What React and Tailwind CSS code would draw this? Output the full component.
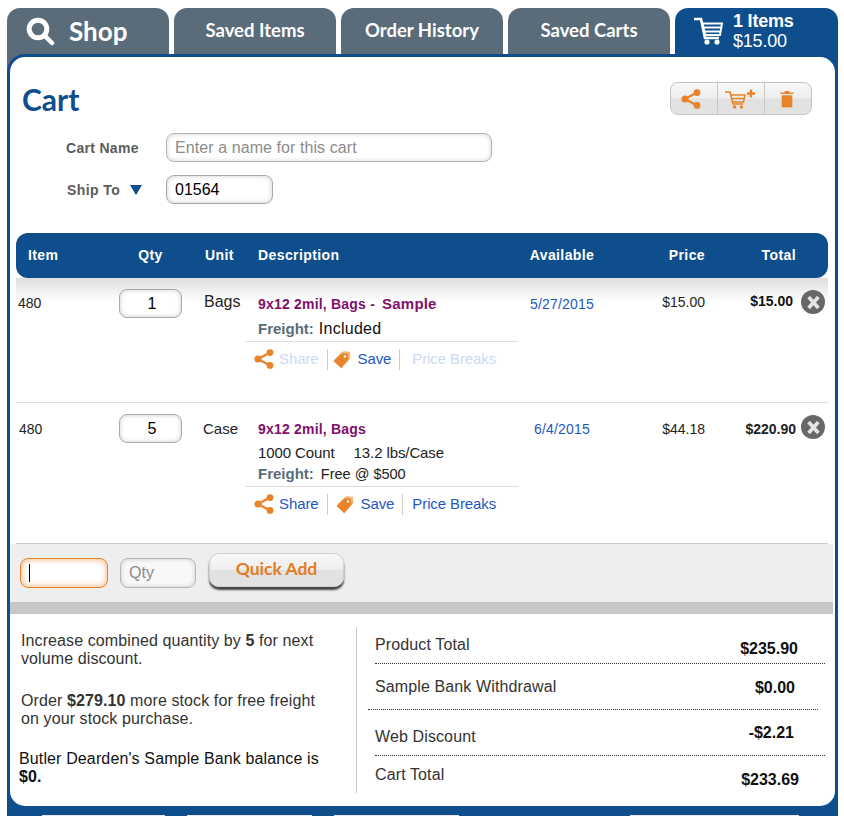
import React from "react";

const BLUE = "#0f4e8c";

function SearchIcon() {
  return (
    <svg width="29" height="29" viewBox="0 0 29 29" fill="none">
      <circle cx="12" cy="12" r="8.8" stroke="#fff" strokeWidth="5" />
      <path d="M18.5 18.5 L26 26" stroke="#fff" strokeWidth="4.5" strokeLinecap="round" />
    </svg>
  );
}

function CartIcon() {
  return (
    <svg width="29" height="28" viewBox="0 0 29 28" fill="none">
      <path d="M0 2 H7 L11 21 H25" stroke="#fff" strokeWidth="2.6" />
      <path d="M8.5 6.5 H28 L26 18 H11 Z M10 10.5 H27 M11 14.5 H26" stroke="#fff" strokeWidth="2" />
      <circle cx="13" cy="25" r="2.6" fill="#fff" />
      <circle cx="23" cy="25" r="2.6" fill="#fff" />
    </svg>
  );
}

function ShareIcon({ size = 20 }) {
  return (
    <svg width={size} height={size} viewBox="0 0 20 20" fill="none">
      <path d="M4 10 L16 3.5 M4 10 L16 16.5" stroke="#e8832a" strokeWidth="2.4" />
      <circle cx="4" cy="10" r="3.6" fill="#e8832a" />
      <circle cx="16" cy="3.6" r="3.4" fill="#e8832a" />
      <circle cx="16" cy="16.4" r="3.4" fill="#e8832a" />
    </svg>
  );
}

function TagIcon() {
  return (
    <svg width="18" height="19" viewBox="0 0 18 19" fill="none">
      <path d="M1 10 L9 2 L11 1 L17 2 L17.5 8 L8.5 18.5 Z" fill="#f3b57e" />
      <path d="M0.5 11 L8.5 3.5 L14.5 3.5 L15.5 9.5 L8 18 Z" fill="#e8832a" />
      <circle cx="12" cy="6.5" r="1.2" fill="#fff" />
    </svg>
  );
}

function CartPlusIcon() {
  return (
    <svg width="32" height="20" viewBox="0 0 32 20" fill="none">
      <path d="M0 3 H5 L8 15 H18" stroke="#e8832a" strokeWidth="1.6" />
      <path d="M6 6 H20 L18.5 13 H8 M7 9.5 H19.5" stroke="#e8832a" strokeWidth="1.5" />
      <circle cx="9.5" cy="18" r="1.7" fill="#e8832a" />
      <circle cx="16.5" cy="18" r="1.7" fill="#e8832a" />
      <path d="M22 4.5 H30 M26 0.5 V8.5" stroke="#e8832a" strokeWidth="2.4" />
    </svg>
  );
}

function TrashIcon() {
  return (
    <svg width="14" height="18" viewBox="0 0 15 18">
      <path d="M0.5 2 H5 V0.5 H10 V2 H14.5 V3.6 H0.5 Z" fill="#e8832a" />
      <path d="M1.8 5 H13.2 V18 H1.8 Z" fill="#e8832a" />
    </svg>
  );
}

function RemoveButton() {
  return (
    <div className="flex h-6 w-6 items-center justify-center rounded-full bg-[#686868]">
      <svg width="13" height="13" viewBox="0 0 12 12">
        <path d="M1.5 1 L10.5 11 M10.5 1 L1.5 11" stroke="#e4e4e4" strokeWidth="3.4" />
      </svg>
    </div>
  );
}

function QtyInput({ value }) {
  return (
    <input
      readOnly
      value={value}
      className="h-[29px] w-[63px] rounded-lg border border-[#a9a9a9] bg-white pl-[3px] text-center text-base text-black shadow-[inset_0_0_5px_rgba(0,0,0,0.2)] outline-none"
    />
  );
}

function LinkRow({ disabled, saveGap, breakGap }) {
  const shareColor = disabled ? "text-[#ccd9f3]" : "text-[#1d57c4]";
  return (
    <div className="flex h-[20px] items-center pl-[9px] text-[15px] tracking-[-0.1px]">
      <ShareIcon />
      <span className={`ml-[5px] ${shareColor}`}>Share</span>
      <div className="ml-[8px] h-[21px] w-px bg-[#ccc]" />
      <div className={saveGap}>
        <TagIcon />
      </div>
      <span className="ml-[7px] text-[#1d57c4]">Save</span>
      <div className="ml-[8px] h-[21px] w-px bg-[#ccc]" />
      <span className={`${breakGap} ${shareColor}`}>Price Breaks</span>
    </div>
  );
}

function SummaryRow({ label, value, labelPad, valuePad, rowClass }) {
  return (
    <div className={`flex justify-between text-base leading-[18px] ${rowClass}`}>
      <span className={`tracking-[0.12px] text-[#333] ${labelPad}`}>{label}</span>
      <span className={`font-bold text-[#111] ${valuePad}`}>{value}</span>
    </div>
  );
}

export default function App() {
  return (
    <div className="h-[816px] w-[844px] overflow-hidden bg-white pt-2 font-['Liberation_Sans',Arial,sans-serif] text-[#222]">
      {/* tabs */}
      <div className="ml-[7px] flex h-[46px] gap-[5px] font-['Lato',sans-serif] font-bold text-white">
        <div className="flex w-[162px] items-center rounded-t-[13px] bg-[#5a6b79] pl-[19px]">
          <SearchIcon />
          <span className="ml-[14px] text-[26px]">Shop</span>
        </div>
        <div className="flex w-[162px] items-center justify-center rounded-t-[13px] bg-[#5a6b79] text-[18.5px]">Saved Items</div>
        <div className="flex w-[162px] items-center justify-center rounded-t-[13px] bg-[#5a6b79] text-[18.5px]">Order History</div>
        <div className="flex w-[162px] items-center justify-center rounded-t-[13px] bg-[#5a6b79] text-[18.5px]">Saved Carts</div>
        <div className="flex w-[163px] items-center rounded-t-[13px] bg-[#0f4e8c] pl-[19px] font-['Liberation_Sans',Arial,sans-serif]">
          <CartIcon />
          <div className="ml-[10px] text-lg leading-[20px] tracking-[-0.2px]">
            <div>1 Items</div>
            <div className="font-normal">$15.00</div>
          </div>
        </div>
      </div>

      <div className="ml-[7px] w-[831px] bg-[linear-gradient(90deg,#5a6b79_50%,#0f4e8c_50%)]">
        <div className="rounded-t-[18px] bg-[#0f4e8c] px-[3px] pt-[3px]">
          <div className="h-[749px] rounded-[15px] bg-white">
            {/* cart heading */}
            <div className="flex h-[58px] items-end justify-between pl-3 pr-[23px]">
              <h1 className="mb-[-1px] h-[34px] font-['Lato',sans-serif] text-[30px] font-bold leading-[34px]" style={{ color: BLUE }}>
                Cart
              </h1>
              <div className="flex h-[33px] w-[142px] rounded-lg border border-[#c4c4c4] bg-[linear-gradient(#f8f8f8,#eeeeee_48%,#e1e1e1_52%,#e3e3e3)]">
                <div className="flex w-[47px] items-center justify-center border-r border-[#c8c8c8] pr-[6px]">
                  <ShareIcon />
                </div>
                <div className="flex w-[47px] items-center justify-center border-r border-[#c8c8c8]">
                  <CartPlusIcon />
                </div>
                <div className="flex flex-1 items-center justify-center pr-[3px]">
                  <TrashIcon />
                </div>
              </div>
            </div>

            {/* cart form */}
            <div className="mt-[18px] flex items-center pl-[56px]">
              <label className="w-[100px] text-sm font-bold tracking-[0.3px] text-[#5c5c5c]">Cart Name</label>
              <input
                placeholder="Enter a name for this cart"
                className="h-[29px] w-[326px] rounded-lg border border-[#b5b5b5] bg-white px-2 text-base tracking-[0.08px] shadow-[inset_0_0_5px_rgba(0,0,0,0.18)] outline-none placeholder:text-[#8c8c8c]"
              />
            </div>
            <div className="mt-[13px] flex items-center pl-[57px]">
              <label className="flex w-[99px] items-center text-sm font-bold tracking-[0.4px] text-[#5c5c5c]">
                Ship To
                <span className="ml-[10px] h-0 w-0 border-x-[6px] border-t-[10px] border-x-transparent border-t-[#0f4e8c]" />
              </label>
              <input
                readOnly
                value="01564"
                className="h-[29px] w-[107px] rounded-lg border border-[#a9a9a9] bg-white px-2 text-base text-black shadow-[inset_0_0_5px_rgba(0,0,0,0.2)] outline-none"
              />
            </div>

            {/* items table */}
            <div className="ml-[6px] mt-[29px] w-[812px]">
              <div className="flex h-[45px] items-center rounded-xl bg-[#0f4e8c] pb-[2px] text-sm font-bold tracking-[0.4px] text-white">
                <div className="w-[103px] pl-3">Item</div>
                <div className="w-[63px] text-center">Qty</div>
                <div className="w-[63px] pl-[23px]">Unit</div>
                <div className="w-[273px] pl-[13px]">Description</div>
                <div className="w-[88px] text-center">Available</div>
                <div className="w-[99px] text-right">Price</div>
                <div className="w-[91px] text-right">Total</div>
              </div>

              <div className="flex h-[125px] items-start border-b border-[#ddd] bg-[linear-gradient(#dedede,#ffffff_24px)] text-sm leading-5">
                <div className="w-[103px] pl-[2px] pt-[15px]">480</div>
                <div className="w-[63px] pt-[11px]">
                  <QtyInput value="1" />
                </div>
                <div className="w-[63px] pl-[22px] pt-[14px] text-base/5">Bags</div>
                <div className="w-[273px] pt-4">
                  <div className="pl-[13px] font-bold tracking-[0.2px] text-[#80106b]">
                    9x12 2mil, Bags - <span className="ml-[3px] text-[15px]">Sample</span>
                  </div>
                  <div className="mt-[5px] flex items-center pl-[13px]">
                    <span className="text-[15px] font-bold text-[#5a6b79]">Freight:</span>
                    <span className="ml-[5px] text-base/5 tracking-[0.25px] text-[#111]">Included</span>
                  </div>
                  <div className="mt-[2px] border-t border-[#ddd] pt-[7px]">
                    <LinkRow disabled saveGap="ml-[5px]" breakGap="ml-[12px]" />
                  </div>
                </div>
                <div className="w-[88px] pt-4 text-center tracking-[0.2px] text-[#1d57c4]">5/27/2015</div>
                <div className="w-[99px] pt-[14px] text-right">$15.00</div>
                <div className="w-[88px] pt-[13px] text-right font-bold text-[#111]">$15.00</div>
                <div className="ml-[8px] pt-3">
                  <RemoveButton />
                </div>
              </div>

              <div className="flex h-[141px] items-start border-b border-[#ccc] text-sm leading-5">
                <div className="w-[103px] pl-[3px] pt-4">480</div>
                <div className="w-[63px] pt-[11px]">
                  <QtyInput value="5" />
                </div>
                <div className="w-[63px] pl-[21px] pt-4 text-[15px]">Case</div>
                <div className="w-[273px] pt-4">
                  <div className="pl-[13px] font-bold tracking-[0.2px] text-[#80106b]">9x12 2mil, Bags</div>
                  <div className="mt-[4px] flex pl-[13px] text-[15px] tracking-[-0.1px]">
                    <span>1000 Count</span>
                    <span className="ml-[19px]">13.2 lbs/Case</span>
                  </div>
                  <div className="mt-[1px] flex items-center pl-[13px]">
                    <span className="text-[15px] font-bold text-[#5a6b79]">Freight:</span>
                    <span className="ml-[7px] text-[14.5px] text-[#222]">Free @ $500</span>
                  </div>
                  <div className="mt-[2px] border-t border-[#ddd] pt-[7px]">
                    <LinkRow saveGap="ml-[8px]" breakGap="ml-[9px]" />
                  </div>
                </div>
                <div className="w-[88px] pt-4 text-center tracking-[0.2px] text-[#1d57c4]">6/4/2015</div>
                <div className="w-[99px] pt-4 text-right">$44.18</div>
                <div className="w-[91px] pt-4 text-right font-bold">$220.90</div>
                <div className="ml-[5px] pt-3">
                  <RemoveButton />
                </div>
              </div>
            </div>

            {/* quick add */}
            <div className="mr-[2px] flex h-[58px] items-start bg-[#eeeeee] pl-[10px]">
              <div className="mt-[14px] flex h-[30px] w-[88px] items-center rounded-lg border border-[#e8832a] bg-white pl-2 shadow-[inset_0_0_6px_rgba(232,131,42,0.7)]">
                <div className="h-[18px] w-px bg-black" />
              </div>
              <input
                placeholder="Qty"
                className="ml-3 mt-[14px] h-[30px] w-[76px] rounded-lg border border-[#b5b5b5] bg-[#f8f8f8] px-2 text-base shadow-[inset_0_0_5px_rgba(0,0,0,0.18)] outline-none placeholder:text-[#8c8c8c]"
              />
              <button className="ml-[13px] mt-[9px] h-[34px] w-[135px] rounded-[10px] border border-[#d0d0d0] bg-[linear-gradient(#f8f8f8,#eeeeee_48%,#e1e1e1_52%,#e3e3e3)] pb-[2px] font-['Lato',sans-serif] text-[17.5px] font-bold text-[#e47c22] shadow-[0_3px_2px_#444]">
                Quick Add
              </button>
            </div>
            <div className="mr-[2px] h-3 bg-[#c6c8c7]" />

            {/* totals */}
            <div className="mt-[13px] flex">
              <div className="h-[166px] w-[347px] border-r border-[#ccc] pl-[11px] pt-[5px] text-base leading-[18px] tracking-[0.1px] text-[#333]">
                <p className="w-[310px]">
                  Increase combined quantity by <b>5</b> for next volume discount.
                </p>
                <p className="mt-6 w-[310px]">
                  Order <b>$279.10</b> more stock for free freight on your stock purchase.
                </p>
                <p className="-ml-[2px] mt-[22px] w-[310px] tracking-[0.13px] text-[#111]">
                  Butler Dearden's Sample Bank balance is <b>$0.</b>
                </p>
              </div>
              <div className="ml-[18px] w-[450px]">
                <SummaryRow
                  label="Product Total"
                  value="$235.90"
                  labelPad="pt-[9px]"
                  valuePad="pt-[13px] pr-[27px]"
                  rowClass="h-[37px] border-b border-dotted border-[#333]"
                />
                <SummaryRow
                  label="Sample Bank Withdrawal"
                  value="$0.00"
                  labelPad="pt-[14px] pl-[7px]"
                  valuePad="pt-[15px] pr-[23px]"
                  rowClass="-ml-[7px] h-[46px] w-[450px] border-b border-dotted border-[#333]"
                />
                <SummaryRow
                  label="Web Discount"
                  value="-$2.21"
                  labelPad="pt-[18px]"
                  valuePad="pt-[14px] pr-[31px]"
                  rowClass="h-[46px] border-b border-dotted border-[#333]"
                />
                <SummaryRow label="Cart Total" value="$233.69" labelPad="pt-[10px]" valuePad="pt-[15px] pr-[26px]" rowClass="" />
              </div>
            </div>
          </div>

          {/* footer nav, cut off by the window */}
          <div className="mt-[9px] flex h-px pl-[32px]">
            <div className="w-[123px] bg-[#e8e8e8]" />
            <div className="ml-[22px] w-[125px] bg-[#e8e8e8]" />
            <div className="ml-[22px] w-[125px] bg-[#e8e8e8]" />
            <div className="ml-[171px] w-[169px] bg-[#e8e8e8]" />
          </div>
        </div>
      </div>
    </div>
  );
}
